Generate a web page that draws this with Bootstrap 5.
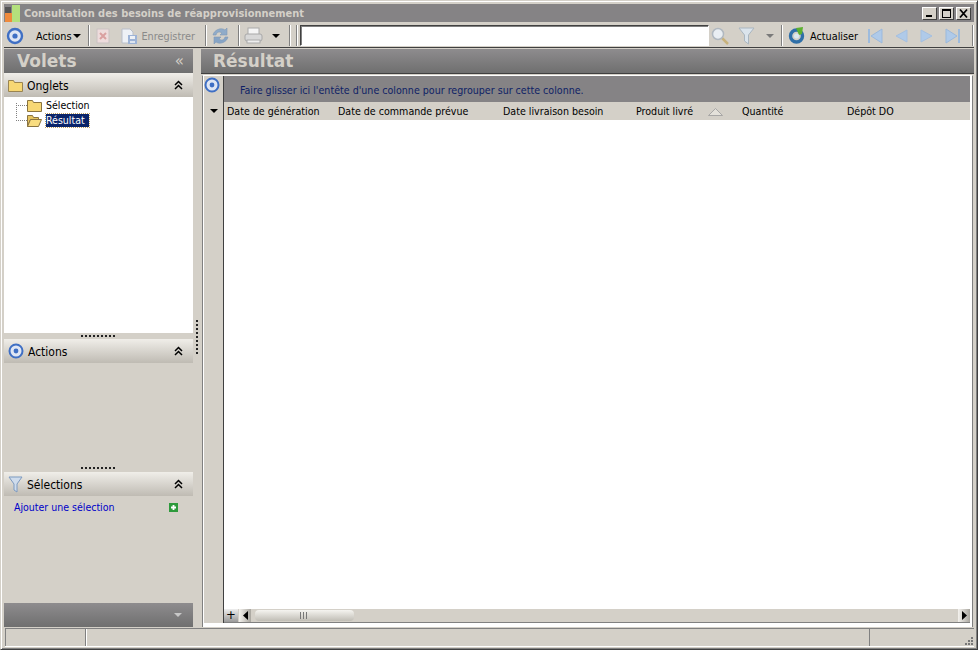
<!DOCTYPE html>
<html lang="fr">
<head>
<meta charset="utf-8">
<title>Consultation des besoins de réapprovisionnement</title>
<link href="https://cdn.jsdelivr.net/npm/bootstrap@5.3.0/dist/css/bootstrap.min.css" rel="stylesheet">
<style>
html,body{height:100%;margin:0;overflow:hidden}
body{background:#d4d0c8;font-family:"DejaVu Sans Condensed","Noto Sans",sans-serif;font-size:10.8px;color:#000;line-height:1}
svg{display:block;flex:none}
.win{width:978px;height:650px;border-style:solid;border-color:#d4d0c8 #404040 #404040 #d4d0c8;border-width:1px;box-shadow:inset 1px 1px 0 #fff,inset -1px -1px 0 #808080;padding:3px 3px 2px 3px}
.win>*,.leftp>*,.rightp>*{flex:none}
.titlebar{height:18px;background:#858385;color:#d4d0c8;font-family:"DejaVu Sans",sans-serif;font-weight:700;font-size:9.9px}
.titlebar .ttl{margin-left:3px;padding-top:2px}
.capbtn{width:15px;height:13px;background:#d4d0c8;border:1px solid;border-color:#fff #404040 #404040 #fff;margin-left:2px}
.toolbar{height:26px;border-bottom:1px solid #404040;padding:3px 0 1px}
.toolbar>*{flex:none}
.tsep{width:2px;height:21px;border-left:1px solid #808080;border-right:1px solid #fff}
.tbtxt{font-size:10.8px;padding-top:3px}
.muted{color:#8a8a8a}
.caret-d{width:0;height:0;border-left:4px solid transparent;border-right:4px solid transparent;border-top:4px solid #000}
.caret-g{border-top-color:#7a7a7a}
.searchbox{width:409px;height:21px;background:#fff;border:1px solid;border-color:#404040 #fff #fff #404040;box-shadow:inset 1px 1px 0 #808080}
.main{height:579px;padding-top:1px}
.leftp{width:189px}
.bighead{height:24px;background:linear-gradient(#8e8c8e,#6f6f6f);color:#d4d0c8;font-family:"DejaVu Sans",sans-serif;font-weight:700;font-size:17px}
.bighead.lh{padding-left:13px;padding-right:9px}
.bighead .chev{font-size:15px;font-weight:400;color:#d4d0c8}
.sec{height:24px;background:linear-gradient(#f0eee9,#bfbbb3);padding-left:4px;padding-right:10px;font-size:12px}
.sec .lbl{margin-left:4px;padding-top:2px}
.tree{height:236px;background:#fff;padding:0 0 0 12px;font-size:10.5px}
.treelines{position:relative;padding-top:1px}
.node{height:15px}
.dots{width:11px;height:1px;border-top:1px dotted #808080}
.vline{position:absolute;left:0;top:6px;height:15px;border-left:1px dotted #808080}
.sel-node{background:#0a246a;color:#fff;outline:1px dotted #c0a060;padding:1px 0;margin-left:4px;width:43px}
.node-txt{margin-left:4px}
.grip{height:6px;background:#d4d0c8}
.gripdots{width:35px;height:2px;background:repeating-linear-gradient(90deg,#222 0 2px,transparent 2px 4px)}
.acbody{height:100px}
.addrow{height:22px;padding:0 15px 0 10px;color:#0000c8;font-size:10.5px}
.selbody{height:85px}
.leftbottom{height:24px;background:linear-gradient(#8e8c8e,#6f6f6f);padding-right:11px}
.vsplit{width:8px}
.vdots{width:2px;height:36px;margin-top:271px;margin-left:3px;background:repeating-linear-gradient(180deg,#222 0 2px,transparent 2px 4px)}
.rightp{width:773px}
.rightp .bighead{height:25px;padding-left:12px;border-bottom:1px solid #404040}
.gridwrap{flex:1 1 0!important;min-height:0;background:#fff;margin:1px 1px 0 1px;border-left:1px solid #808080;border-right:1px solid #808080;border-top:1px solid #fff;padding:0 2px 4px 1px}
.gutter{width:20px;background:#d4d0c8;border-right:1px solid #404040}
.gicon{height:26px;padding:1px 0 0 0}
.gcaret{height:18px}
.grouppanel{height:26px;background:#858385;color:#0f1f66;padding:2px 0 0 16px;font-size:10.6px}
.colhead{height:18px;background:#d4d0c8;padding:1px 0 0 3px;font-size:10.6px}
.c1{width:111px}.c2{width:165px}.c3{width:133px}.c4{width:72px}.c5{width:34px}.c6{width:105px}
.rows{flex:1}
.hscroll{height:14px;background:#d4d0c8;border-bottom:1px solid #808080}
.gplus{width:14px;height:13px;background:linear-gradient(#eee,#9a9a9a);font-size:13px;line-height:12px;text-align:center}
.sb-btn{width:12px;height:13px;background:linear-gradient(90deg,#f4f2ee,#a9a69f)}
.sb-l{margin-left:1px;margin-right:4px}
.thumb{width:99px;height:11px;border-radius:4px;background:linear-gradient(#f5f4f0,#c0bdb5)}
.thumb i{display:block;width:9px;height:7px;background:repeating-linear-gradient(90deg,#777 0 1px,transparent 1px 3px)}
.status{height:19px;margin-top:1px;border-top:1px solid #808080;border-bottom:1px solid #fff;margin-left:1px}
.st1{width:81px;height:100%;border-left:1px solid #808080;border-right:1px solid #808080}
.st2{flex:1;border-left:1px solid #fff;height:100%}
.st3{width:105px;height:100%;border-left:1px solid #808080}
</style>
</head>
<body>
<div class="win d-flex flex-column">
  <div class="titlebar d-flex align-items-center">
    <svg width="17" height="18" viewBox="0 0 17 18"><rect width="17" height="18" fill="#858385"/><rect x="1" y="3" width="6" height="6" fill="#555"/><rect x="1" y="9" width="8" height="9" fill="#ef8a3c"/><rect x="8" y="1" width="8" height="17" fill="#b4e07c"/></svg>
    <span class="ttl">Consultation des besoins de réapprovisionnement</span>
    <div class="ms-auto d-flex" style="margin-right:3px">
      <div class="capbtn d-flex justify-content-center"><svg width="9" height="11" viewBox="0 0 9 11"><rect x="1" y="7" width="6" height="2" fill="#000"/></svg></div>
      <div class="capbtn d-flex justify-content-center"><svg width="11" height="11" viewBox="0 0 11 11"><rect x="1.500" y="1.500" width="8" height="8" fill="none" stroke="#000"/><rect x="1" y="1" width="9" height="2" fill="#000"/></svg></div>
      <div class="capbtn d-flex justify-content-center"><svg width="11" height="11" viewBox="0 0 11 11"><path d="M2 1.500l7 8M9 1.500l-7 8" stroke="#000" stroke-width="1.800"/></svg></div>
    </div>
  </div>

  <div class="toolbar d-flex align-items-center">
    <svg width="18" height="18" viewBox="0 0 18 18" style="margin-left:2px"><circle cx="9" cy="9" r="7" fill="#dfe6f4" stroke="#3f6fc4" stroke-width="2.400"/><circle cx="9" cy="9" r="2.600" fill="#3f6fc4"/></svg>
    <span class="tbtxt" style="margin-left:12px">Actions</span>
    <span class="caret-d" style="margin-left:2px"></span>
    <span class="tsep" style="margin-left:7px"></span>
    <svg width="14" height="16" viewBox="0 0 14 16" style="margin-left:6px"><rect x="1" y="1" width="12" height="14" fill="#eedcdc" stroke="#c9c2c2"/><path d="M4 5l6 6M10 5l-6 6" stroke="#d9a0a0" stroke-width="2"/></svg>
    <svg width="16" height="16" viewBox="0 0 16 16" style="margin-left:11px"><path d="M1 1h8l3 3v4H8v7H1z" fill="#eef1f6" stroke="#b9bfca"/><rect x="7" y="7" width="9" height="9" fill="#9db3d6"/><rect x="9" y="8" width="5" height="3" fill="#eef1f6"/><rect x="9" y="13" width="5" height="2" fill="#dde4ef"/></svg>
    <span class="tbtxt muted" style="margin-left:4px">Enregistrer</span>
    <span class="tsep" style="margin-left:10px"></span>
    <svg width="17" height="18" viewBox="0 0 17 18" style="margin-left:5px"><path d="M1 8C2 3 9 0 13 3l2-2v7h-7l2-2C7 4 5 5 4 8z" fill="#8fabc9" stroke="#7f98b5" stroke-width=".6"/><path d="M16 10c-1 5-8 8-12 5l-2 2v-7h7l-2 2c3 2 5 1 6-2z" fill="#86a4c6" stroke="#7f98b5" stroke-width=".6"/></svg>
    <span class="tsep" style="margin-left:9px"></span>
    <svg width="19" height="18" viewBox="0 0 19 18" style="margin-left:4px"><rect x="4" y="1" width="11" height="7" fill="#f5f5f5" stroke="#aaa"/><rect x="1" y="7" width="17" height="7" rx="2" fill="#d8d8d8" stroke="#a8a8a8"/><rect x="3" y="13" width="13" height="3" fill="#eee" stroke="#aaa"/></svg>
    <span class="caret-d" style="margin-left:9px"></span>
    <span class="tsep" style="margin-left:9px"></span>
    <span class="tsep" style="margin-left:5px"></span>
    <div class="searchbox" style="margin-left:2px"></div>
    <svg width="18" height="18" viewBox="0 0 18 18" style="margin-left:2px"><line x1="11" y1="11" x2="17" y2="17" stroke="#c8b27c" stroke-width="2.500"/><circle cx="7" cy="7" r="5.500" fill="#e9eef3" stroke="#b0b8c0" stroke-width="1.500"/></svg>
    <svg width="17" height="18" viewBox="0 0 17 18" style="margin-left:9px"><path d="M1 1h15l-5.500 7v9l-4-3V8z" fill="#dbe4ec" stroke="#aab6c0"/></svg>
    <span class="caret-d caret-g" style="margin-left:11px"></span>
    <span class="tsep" style="margin-left:7px"></span>
    <svg width="17" height="17" viewBox="0 0 17 17" style="margin-left:5px"><circle cx="8.500" cy="9" r="6" fill="none" stroke="#2f6fa8" stroke-width="3.400"/><path d="M8 1l7-1-1 7-3 1z" fill="#5cb030"/><circle cx="8.500" cy="9" r="2.500" fill="#dce8f0"/></svg>
    <span class="tbtxt" style="margin-left:5px">Actualiser</span>
    <svg width="16" height="16" viewBox="0 0 16 16" style="margin-left:9px"><rect x="1" y="1" width="2" height="14" fill="#9dbbdd"/><path d="M15 1v14L4 8z" fill="#afcae9" stroke="#9bb9dc"/></svg>
    <svg width="14" height="16" viewBox="0 0 14 16" style="margin-left:11px"><path d="M13 2v12L2 8z" fill="#afcae9" stroke="#a5c0e0"/></svg>
    <svg width="14" height="16" viewBox="0 0 14 16" style="margin-left:12px"><path d="M1 2v12L12 8z" fill="#afcae9" stroke="#a5c0e0"/></svg>
    <svg width="16" height="16" viewBox="0 0 16 16" style="margin-left:11px"><rect x="13" y="1" width="2" height="14" fill="#9dbbdd"/><path d="M1 1v14L12 8z" fill="#afcae9" stroke="#9bb9dc"/></svg>
    <span class="tsep" style="margin-left:11px"></span>
  </div>

  <div class="main d-flex">
    <div class="leftp d-flex flex-column">
      <div class="bighead lh d-flex align-items-center justify-content-between"><span>Volets</span><span class="chev">«</span></div>
      <div class="sec d-flex align-items-center">
        <svg width="15" height="13" viewBox="0 0 15 13"><path d="M.5 12.500V1.500h5l1 2h8v9z" fill="#f7d774" stroke="#9a8450"/></svg>
        <span class="lbl">Onglets</span>
        <svg class="ms-auto" width="9" height="10" viewBox="0 0 9 10"><path d="M1 5l3.500-3.500L8 5M1 9l3.500-3.500L8 9" fill="none" stroke="#000" stroke-width="1.500"/></svg>
      </div>
      <div class="tree d-flex flex-column">
        <div class="treelines">
          <span class="vline"></span>
          <div class="node d-flex align-items-center">
            <span class="dots"></span>
            <svg width="15" height="13" viewBox="0 0 15 13"><path d="M.5 12.500V1.500h5l1 2h8v9z" fill="#f7d774" stroke="#8a7440"/></svg>
            <span class="node-txt">Sélection</span>
          </div>
          <div class="node d-flex align-items-center">
            <span class="dots"></span>
            <svg width="15" height="13" viewBox="0 0 15 13"><path d="M.5 12.500V1.500h5l1 2h5v2h-8l-3 7z" fill="#e6c460" stroke="#8a7440"/><path d="M3.500 5.500h11l-3 7H.5z" fill="#f9dd80" stroke="#8a7440"/></svg>
            <span class="sel-node">Résultat</span>
          </div>
        </div>
      </div>
      <div class="grip d-flex justify-content-center align-items-center"><span class="gripdots"></span></div>
      <div class="sec d-flex align-items-center">
        <svg width="16" height="16" viewBox="0 0 16 16"><circle cx="8" cy="8" r="6.500" fill="#dfe6f4" stroke="#3f6fc4" stroke-width="2"/><circle cx="8" cy="8" r="2.400" fill="#3f6fc4"/></svg>
        <span class="lbl">Actions</span>
        <svg class="ms-auto" width="9" height="10" viewBox="0 0 9 10"><path d="M1 5l3.500-3.500L8 5M1 9l3.500-3.500L8 9" fill="none" stroke="#000" stroke-width="1.500"/></svg>
      </div>
      <div class="acbody"></div>
      <div class="grip d-flex justify-content-center align-items-center" style="height:9px"><span class="gripdots"></span></div>
      <div class="sec d-flex align-items-center">
        <svg width="15" height="17" viewBox="0 0 15 17"><path d="M1 1h13l-5 7v8l-3-2V8z" fill="#cfdcec" stroke="#7d9ac0"/></svg>
        <span class="lbl">Sélections</span>
        <svg class="ms-auto" width="9" height="10" viewBox="0 0 9 10"><path d="M1 5l3.500-3.500L8 5M1 9l3.500-3.500L8 9" fill="none" stroke="#000" stroke-width="1.500"/></svg>
      </div>
      <div class="addrow d-flex align-items-center justify-content-between">
        <span>Ajouter une sélection</span>
        <svg width="9" height="9" viewBox="0 0 9 9"><rect width="9" height="9" fill="#2e9a3c"/><path d="M4.500 2v5M2 4.500h5" stroke="#fff" stroke-width="1.800"/></svg>
      </div>
      <div class="selbody"></div>
      <div class="leftbottom d-flex align-items-center justify-content-end"><span class="caret-d" style="border-top-color:#c8c8c8"></span></div>
    </div>

    <div class="vsplit"><div class="vdots"></div></div>

    <div class="rightp d-flex flex-column">
      <div class="bighead d-flex align-items-center">Résultat</div>
      <div class="gridwrap d-flex">
        <div class="gutter d-flex flex-column">
          <div class="gicon"><svg width="16" height="16" viewBox="0 0 16 16"><circle cx="8" cy="8" r="6.500" fill="#dfe6f4" stroke="#3f6fc4" stroke-width="2"/><circle cx="8" cy="8" r="2.400" fill="#3f6fc4"/></svg></div>
          <div class="gcaret d-flex align-items-center justify-content-center"><span class="caret-d"></span></div>
        </div>
        <div class="flex-grow-1 d-flex flex-column">
          <div class="grouppanel d-flex align-items-center">Faire glisser ici l'entête d'une colonne pour regrouper sur cette colonne.</div>
          <div class="colhead d-flex align-items-center">
            <span class="c1">Date de génération</span>
            <span class="c2">Date de commande prévue</span>
            <span class="c3">Date livraison besoin</span>
            <span class="c4">Produit livré</span>
            <span class="c5"><svg width="15" height="8" viewBox="0 0 15 8"><path d="M.5 7.500h14L7.500.5z" fill="#e4e1da" stroke="#9a9a9a" stroke-width=".8"/></svg></span>
            <span class="c6">Quantité</span>
            <span>Dépôt DO</span>
          </div>
          <div class="rows"></div>
          <div class="hscroll d-flex align-items-center">
            <div class="gplus">+</div>
            <div class="sb-btn sb-l d-flex align-items-center justify-content-center"><svg width="5" height="9" viewBox="0 0 5 9"><path d="M5 0v9L0 4.500z" fill="#000"/></svg></div>
            <div class="thumb d-flex align-items-center justify-content-center"><i></i></div>
            <div class="sb-btn ms-auto d-flex align-items-center justify-content-center"><svg width="5" height="9" viewBox="0 0 5 9"><path d="M0 0v9l5-4.500z" fill="#000"/></svg></div>
          </div>
        </div>
      </div>
    </div>
  </div>

  <div class="status d-flex">
    <div class="st1"></div>
    <div class="st2"></div>
    <div class="st3 d-flex justify-content-end align-items-end">
      <svg width="11" height="11" viewBox="0 0 11 11"><path d="M8 2h2v2H8zM5 5h2v2H5zM8 5h2v2H8zM2 8h2v2H2zM5 8h2v2H5zM8 8h2v2H8z" fill="#777"/></svg>
    </div>
  </div>
</div>
</body>
</html>
